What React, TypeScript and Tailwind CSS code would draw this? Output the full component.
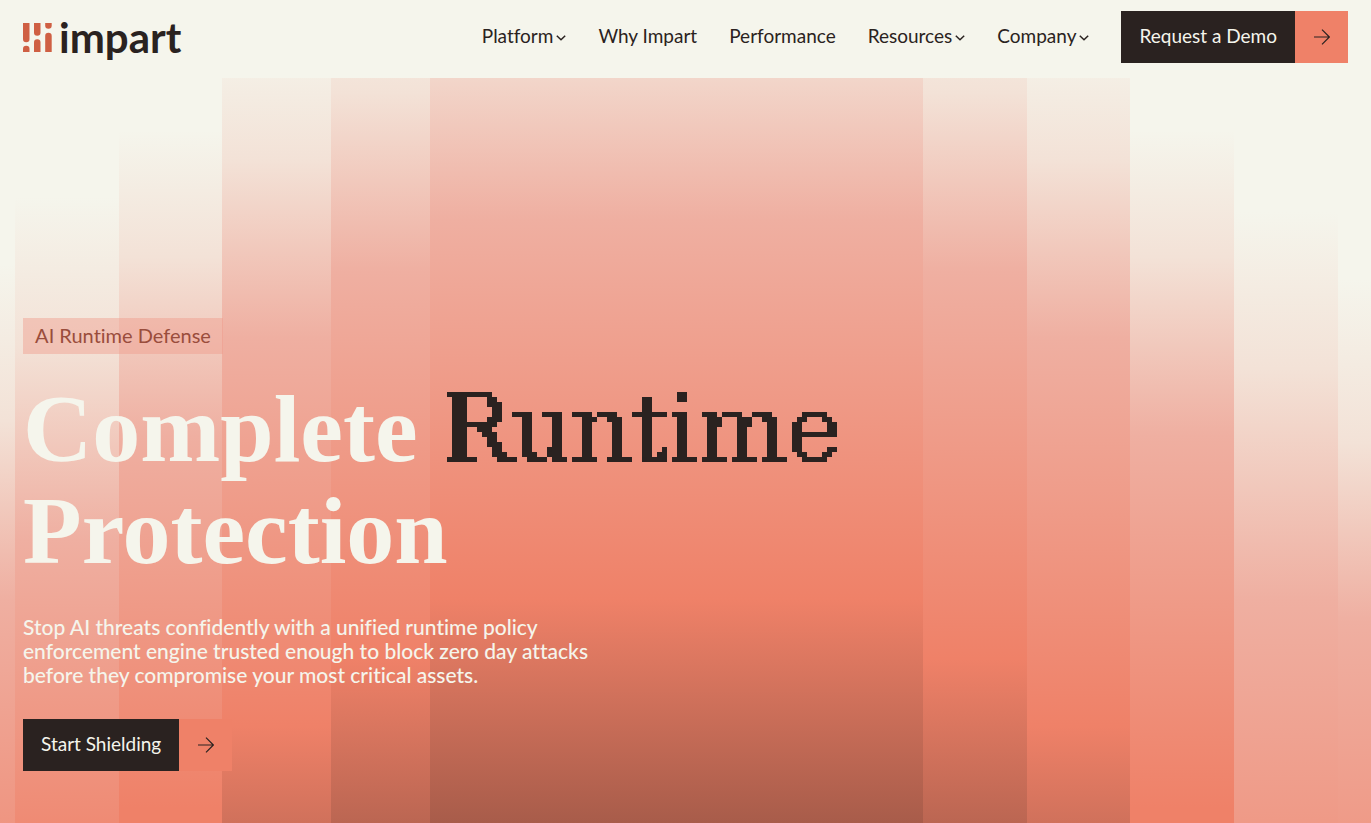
import React from 'react';

const navItems = [
    { label: 'Platform', menu: true },
    { label: 'Why Impart', menu: false },
    { label: 'Performance', menu: false },
    { label: 'Resources', menu: true },
    { label: 'Company', menu: true },
];

// One entry per vertical bar of the hero backdrop, left to right
const stripes = [
    'bg-[linear-gradient(to_bottom,#f5f5ec_25%,#f3e2d7_46%,#efafa1_70%,#ef8168_124%)]',
    'bg-[linear-gradient(to_bottom,#f5f5ec_16%,#f3e2d7_36%,#efafa1_62%,#ef8168_110%)]',
    'bg-[linear-gradient(to_bottom,#f5f5ec_7%,#f3e2d7_24%,#efafa1_48%,#ef8168_98%)]',
    'bg-[linear-gradient(to_bottom,#f5f5ec_-6%,#f3e2d7_11%,#efafa1_35%,#ef8168_87%,#a85c4a_117%)]',
    'bg-[linear-gradient(to_bottom,#f5f5ec_-15%,#f3e2d7_2%,#efafa1_26%,#ef8168_78%,#a85c4a_108%)]',
    'bg-[linear-gradient(to_bottom,#f5f5ec_-23%,#f3e2d7_-6%,#efafa1_19%,#ef8168_70%,#a85c4a_100%)]',
    'bg-[linear-gradient(to_bottom,#f5f5ec_-15%,#f3e2d7_2%,#efafa1_26%,#ef8168_78%,#a85c4a_108%)]',
    'bg-[linear-gradient(to_bottom,#f5f5ec_-6%,#f3e2d7_11%,#efafa1_35%,#ef8168_87%,#a85c4a_117%)]',
    'bg-[linear-gradient(to_bottom,#f5f5ec_7%,#f3e2d7_24%,#efafa1_48%,#ef8168_98%)]',
    'bg-[linear-gradient(to_bottom,#f5f5ec_18%,#f3e2d7_39%,#efafa1_70%,#ef8168_135%)]',
    'bg-[linear-gradient(to_bottom,#f5f5ec_27%,#f3e2d7_49%,#efafa1_73%,#ef8168_135%)]',
];

const LogoMark = () => (
    <svg viewBox="0 0 29 29" className="h-[29px] w-[29px]" fill="#cf5f43" aria-hidden="true">
        <path d="M0 0h6.5v16a3.25 3.25 0 0 1-6.5 0z" />
        <path d="M0 29v-3a3.25 3.25 0 0 1 6.5 0v3z" />
        <path d="M11 0h6.5v9.500a3.250 3.250 0 0 1-6.5 0z" />
        <path d="M11 29v-9.500a3.250 3.250 0 0 1 6.5 0v9.500z" />
        <path d="M22.200 0h6.5v2.500a3.250 3.250 0 0 1-6.5 0z" />
        <path d="M22.200 29v-16a3.250 3.250 0 0 1 6.5 0v16z" />
    </svg>
);

const Chevron = () => (
    <svg viewBox="0 0 10 6" className="mt-1 h-[6px] w-[10px]" fill="none" stroke="#2a2220" strokeWidth="1.5" aria-hidden="true">
        <path d="M.8.8 5 4.800 9.200.8" />
    </svg>
);

const Arrow = () => (
    <svg viewBox="0 0 16 16" className="h-4 w-4" fill="none" stroke="#2a2220" strokeWidth="1.200" aria-hidden="true">
        <path d="M0 8h15.300M8 .6 15.400 8 8 15.400" />
    </svg>
);

const ActionButton = ({ label }: { label: string }) => (
    <button type="button" className="flex h-[52px] items-stretch text-[19px] leading-6 text-[#f5f5ec]">
        <span className="flex items-center bg-[#2a2220] px-[18px] pb-0.5">{label}</span>
        <span className="flex w-[53px] items-center justify-center bg-[#ef8168]">
            <Arrow />
        </span>
    </button>
);

export default function App() {
    return (
        <div className="flex min-h-screen flex-col bg-[#f5f5ec] font-['Lato',sans-serif] text-[#2a2220] [font-variant-ligatures:none]">
            <header className="flex h-[78px] items-center justify-between px-[23px] pb-1">
                <a href="#" className="flex items-center gap-[7px]">
                    <LogoMark />
                    <span className="text-[42px] leading-[50px] font-bold">impart</span>
                </a>

                <nav className="flex items-center gap-8">
                    {navItems.map(item => (
                        <a key={item.label} href="#" className="flex items-center gap-[3px] pb-0.5 text-[19px] leading-6">
                            {item.label}
                            {item.menu && <Chevron />}
                        </a>
                    ))}
                    <ActionButton label="Request a Demo" />
                </nav>
            </header>

            <main className="relative isolate flex-1 overflow-hidden px-[23px] pt-60 pb-[51px]">
                <div className="absolute inset-0 -z-10 grid grid-cols-[15fr_104fr_103fr_109fr_99fr_493fr_104fr_103fr_104fr_104fr_33fr]">
                    {stripes.map((stripe, i) => (
                        <div key={i} className={stripe} />
                    ))}
                </div>

                {/* Blocky lettering for the highlighted word */}
                <svg className="absolute h-0 w-0" aria-hidden="true">
                    <filter id="mosaic" x="0" y="0" width="100%" height="100%" colorInterpolationFilters="sRGB">
                        <feMorphology in="SourceGraphic" operator="dilate" radius="1 0" result="heavy" />
                        <feFlood x="2" y="5" width="1" height="1" />
                        <feComposite x="0" y="3" width="5" height="5" />
                        <feTile result="grid" />
                        <feComposite in="heavy" in2="grid" operator="in" />
                        <feComponentTransfer>
                            <feFuncA type="discrete" tableValues="0 1" />
                        </feComponentTransfer>
                        <feMorphology operator="dilate" radius="2" />
                    </filter>
                </svg>

                <p className="flex h-9 w-[200px] items-center justify-center bg-[#ef9b8c]/45 pb-0.5 text-[20px] leading-6 text-[#9a4d3c]">
                    AI Runtime Defense
                </p>

                <h1 className="mt-6 max-w-[900px] font-['Liberation_Serif',serif] text-[96px] leading-[101px] font-bold text-[#f5f5ec]">
                    Complete{' '}
                    <span className="inline-block font-['DejaVu_Serif',serif] text-[93px] font-normal text-[#2a2220] filter-[url(#mosaic)]">
                        Runtime
                    </span>{' '}
                    Protection
                </h1>

                <p className="mt-[34px] max-w-[600px] text-[21px] leading-6 font-medium text-[#f5f5ec]">
                    Stop AI threats confidently with a unified runtime policy enforcement engine trusted enough to block zero day attacks
                    before they compromise your most critical assets.
                </p>

                <div className="mt-8 flex">
                    <ActionButton label="Start Shielding" />
                </div>
            </main>
        </div>
    );
}
